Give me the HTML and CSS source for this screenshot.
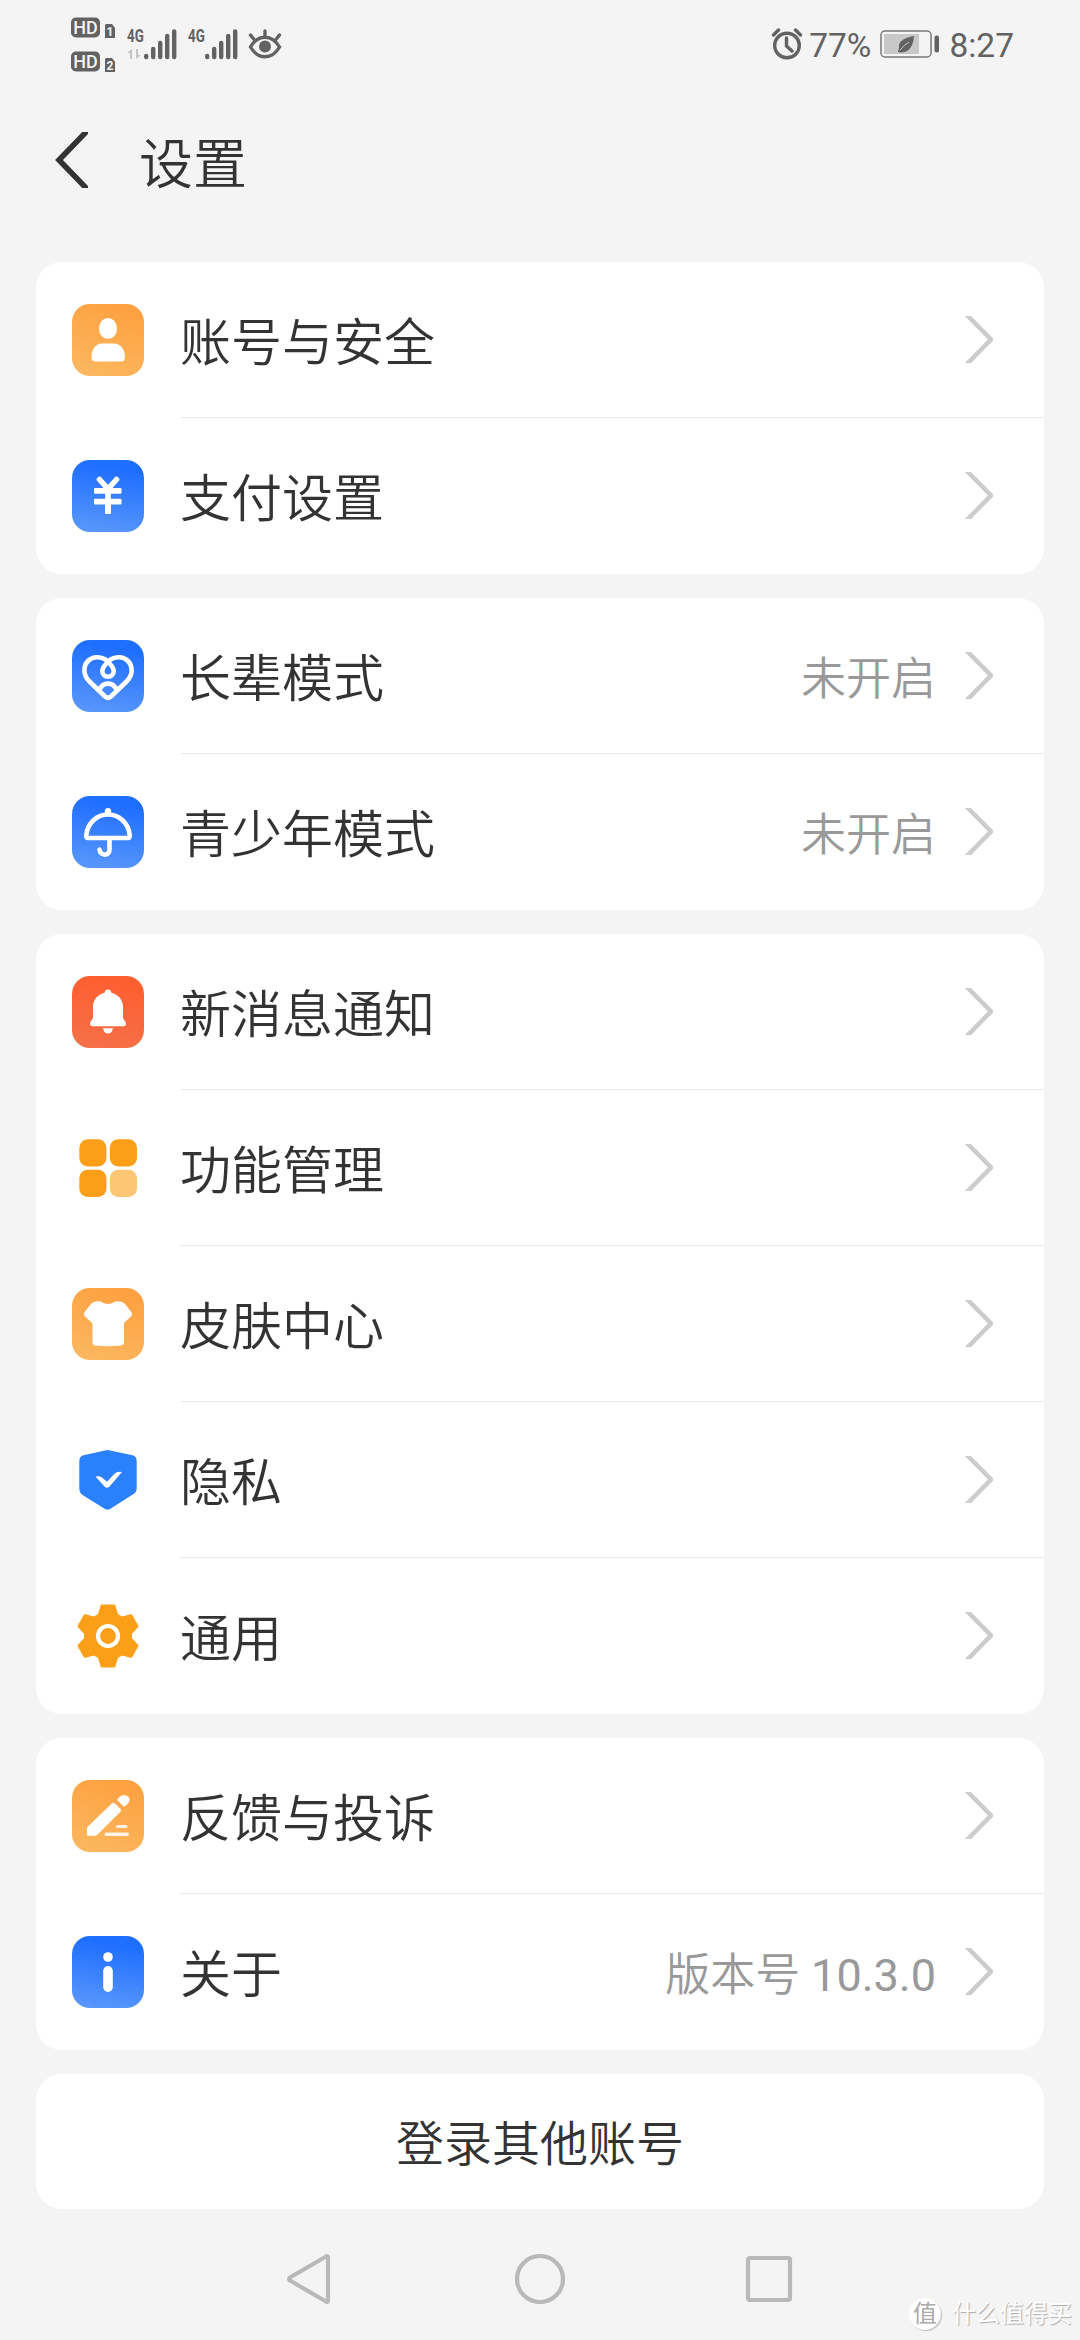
FILE: index.html
```html
<!DOCTYPE html>
<html lang="zh-CN">
<head>
<meta charset="utf-8">
<title>设置</title>
<link rel="stylesheet" href="styles.css">
</head>
<body>
<svg class="defs" width="0" height="0">
  <symbol id="chevron" viewBox="0 0 28 47"><path d="M1-2 26 23.500 1 49" fill="none" stroke="currentColor" stroke-width="4.500"/></symbol>
  <symbol id="signal" viewBox="0 0 33 31"><path d="M2.200 27v1M9.200 20v8M16.200 14v14M23.200 7v21M30.200 2.500V28" fill="none" stroke="currentColor" stroke-width="4.400" stroke-linecap="round"/></symbol>
</svg>
<div class="screen">
  <header class="status">
    <svg class="status-hd" width="45" height="56" viewBox="0 0 45 56">
      <rect width="29" height="20" rx="5" y=".5"/><text x="14.500" y="17" class="hd">HD</text>
      <rect width="29" height="20" rx="5" y="34.500"/><text x="14.500" y="51" class="hd">HD</text>
      <path d="M35 7h6l3 4v10H34V8zM35 41h6l3 4v10H34V42z"/>
      <text x="39" y="19.300" class="sim">1</text><text x="39" y="53.300" class="sim">2</text>
    </svg>
    <div class="network">
      <div class="gen-col"><span class="gen">4G</span><svg width="17" height="12" viewBox="0 19 17 12"><path class="faint" d="M0 24l5-4v10H3v-6zM9 20h2v6h3l-5 4z"/></svg></div>
      <svg class="bars" width="33" height="31"><use href="#signal"/></svg>
    </div>
    <div class="network">
      <div class="gen-col"><span class="gen">4G</span></div>
      <svg class="bars" width="33" height="31"><use href="#signal"/></svg>
    </div>
    <svg class="eye" width="34" height="30" viewBox="0 0 34 30"><g fill="none" stroke="currentColor" stroke-width="3.400" stroke-linecap="round"><path d="M2.500 18C10 5 24 5 31.500 18 24 31 10 31 2.500 18zM17 2v5M2.500 6l4 5M31.500 6l-4 5"/></g><circle cx="17" cy="17.500" r="6"/></svg>
    <div class="status-right">
      <svg width="32" height="32" viewBox="0 0 32 32"><g fill="none" stroke="currentColor" stroke-width="3.400"><circle cx="16" cy="17.500" r="12.300"/><path d="M2.500 7l5-5M24.500 2l5 5M15.500 10v8l5.500 5" stroke-linecap="round"/></g></svg>
      <span class="percent">77%</span>
      <svg class="battery" width="60" height="28" viewBox="0 0 60 28"><rect x="1" y="1" width="50" height="26" rx="4" fill="none" stroke="#777" stroke-width="1.500"/><rect x="4" y="4" width="35" height="20" fill="#c8c8c8"/><path d="M34 6C24 8 18 11 19 18l-1 4 2 .5C28 23 33 18 34 6z"/><path d="M20 20Q24 15 29 12" fill="none" stroke="#c8c8c8"/><rect x="54.500" y="5.500" width="4.500" height="17" rx="2"/></svg>
      <span>8:27</span>
    </div>
  </header>
  <div class="titlebar">
    <svg width="33" height="56" viewBox="0 0 33 56"><path d="M34-3 4 28l30 31" fill="none" stroke="#333" stroke-width="5.600"/></svg>
    <h1>设置</h1>
  </div>
  <main class="groups">
    <section class="card">
      <div class="row"><svg class="icon orange" viewBox="0 0 72 72"><ellipse cx="36" cy="24.500" rx="9" ry="10.500"/><path d="M30 39.500h12c7 0 11 7 11 13.500q0 4.500-4 4.500H23.500q-4 0-4-4.500c0-6.500 3.500-13.500 10.500-13.500z"/></svg><div class="cell"><span class="label">账号与安全</span><svg class="chevron"><use href="#chevron"/></svg></div></div>
      <div class="row"><svg class="icon blue" viewBox="0 0 72 72"><path d="M27.500 19.500 36 29l8.500-9.500M36 29v22" class="line yen"/><rect x="22" y="28" width="27.500" height="5.800" rx="1"/><rect x="22" y="38.700" width="27.500" height="5.800" rx="1"/><rect x="33" y="44" width="6" height="10" rx="1"/></svg><div class="cell"><span class="label">支付设置</span><svg class="chevron"><use href="#chevron"/></svg></div></div>
    </section>
    <section class="card">
      <div class="row"><svg class="icon blue" viewBox="0 0 72 72"><path class="line" d="M33 56.500 17 41C11 35 11 26 16 21c5-5 13-4.500 17.500-1.500C37 22.500 41.700 27 41.700 31a5.700 5.700 0 0 1-11.400 0c0-4 4.700-8.500 8.200-11.500C43 16.500 51 16 56 21c5 5 5 14-1 20L39 56.500q-3 2.500-6 0zM27.500 50c3-8.500 14-8.500 17 0"/></svg><div class="cell"><span class="label">长辈模式</span><span class="value">未开启</span><svg class="chevron"><use href="#chevron"/></svg></div></div>
      <div class="row"><svg class="icon blue" viewBox="0 0 72 72"><path class="line" d="M16 42q-2 0-1.700-3C15.500 27 25 18.500 36 18.500S56.500 27 57.700 39q.3 3-1.700 3zM37.500 43v11c0 6-9.500 6.500-10-.5"/><circle cx="36" cy="15.200" r="3.200"/></svg><div class="cell"><span class="label">青少年模式</span><span class="value">未开启</span><svg class="chevron"><use href="#chevron"/></svg></div></div>
    </section>
    <section class="card">
      <div class="row"><svg class="icon red" viewBox="0 0 72 72"><path d="M36 13.500a3.500 3.500 0 0 1 3.400 3.300C46.500 18.500 51 24 51 31v10c0 3 3 4 3 7q0 2.300-2.500 2.300h-31Q18 50.300 18 48c0-3 3-4 3-7V31c0-7 4.500-12.500 11.600-14.200A3.500 3.500 0 0 1 36 13.500zM31 52.300h10q-1 5.200-5 5.200t-5-5.200z"/></svg><div class="cell"><span class="label">新消息通知</span><svg class="chevron"><use href="#chevron"/></svg></div></div>
      <div class="row"><svg class="icon" viewBox="0 0 72 72"><g fill="#fb9f18"><rect x="7.300" y="7.300" width="27.200" height="27.200" rx="8.500"/><rect x="37.800" y="7.300" width="27.200" height="27.200" rx="8.500"/><rect x="7.300" y="37.800" width="27.200" height="27.200" rx="8.500"/><rect x="37.800" y="37.800" width="27.200" height="27.200" rx="8.500" fill="#fcc675"/></g></svg><div class="cell"><span class="label">功能管理</span><svg class="chevron"><use href="#chevron"/></svg></div></div>
      <div class="row"><svg class="icon orange" viewBox="0 0 72 72"><path d="M24 13.500q4-.5 6 .8 6 3.200 12 0 2-1.300 6-.8 3 .2 5 2.500l6 7.500q2 2.500 0 5l-5.500 5q-1.500.5-1.500 2.500v18q0 3-3 3.500-13 1.500-26 0-2.500-.5-2.500-3.500V36q-.5-2-2-2.500l-5.500-5q-2-2.500 0-5l6-7.500q2-2.300 5-2.500z"/></svg><div class="cell"><span class="label">皮肤中心</span><svg class="chevron"><use href="#chevron"/></svg></div></div>
      <div class="row"><svg class="icon" viewBox="0 0 72 72"><path fill="#2b81fd" d="M33 6.400q2.500-.8 5 0l22.500 4.900q4.200 1.200 4.200 5.700v27q0 4-3.200 6L38 65q-2.500 1.500-5 0L10.500 51q-3.200-2-3.200-7V17q0-4.500 4.200-5.700z"/><path d="M23.500 32.500q4-1 6.500 1l5 4.200 7.500-8Q45 27.300 50 28L37.500 42.500q-2.500 2.500-5 0z"/></svg><div class="cell"><span class="label">隐私</span><svg class="chevron"><use href="#chevron"/></svg></div></div>
      <div class="row"><svg class="icon" viewBox="-36 -36 72 72"><g fill="#fb9f18" stroke="#fb9f18" stroke-width="3" stroke-linejoin="round"><circle r="22.500"/><path id="tooth" d="M-6-30H6l2.500 8.500v43L6 30H-6l-2.500-8.500v-43z"/><use href="#tooth" transform="rotate(60)"/><use href="#tooth" transform="rotate(120)"/></g><circle r="10" fill="none" stroke="#fff" stroke-width="4.200"/></svg><div class="cell"><span class="label">通用</span><svg class="chevron"><use href="#chevron"/></svg></div></div>
    </section>
    <section class="card">
      <div class="row"><svg class="icon orange" viewBox="0 0 72 72"><path d="M15.500 47 40 23.300q1.500-1 2.700 0l6 5.700q1 1.300 0 2.500L25 55q-.7.800-2 .8h-6.500q-1.500 0-1.500-1.500V48.500zM45 20c2-3 4-5 8-4.700 4.500.6 5.500 4.500 3.500 7.700q-2 2.700-4.500 3.700z"/><rect x="44" y="45" width="11.500" height="3" rx="1.500" opacity=".85"/><rect x="32.500" y="52.500" width="24.500" height="3.400" rx="1.600" opacity=".85"/></svg><div class="cell"><span class="label">反馈与投诉</span><svg class="chevron"><use href="#chevron"/></svg></div></div>
      <div class="row"><svg class="icon blue" viewBox="0 0 72 72"><circle cx="36" cy="21" r="4.800"/><rect x="31.200" y="30" width="9.600" height="26" rx="4.800"/></svg><div class="cell"><span class="label">关于</span><span class="value">版本号 <span class="version">10.3.0</span></span><svg class="chevron"><use href="#chevron"/></svg></div></div>
    </section>
    <button class="card switch">登录其他账号</button>
  </main>
  <nav class="navbar">
    <svg width="50" height="50" viewBox="0 0 50 50"><path d="M42 3.500v43q0 2-2 1L4 26.500q-2-1.500 0-3l36-21q2-1 2 1z"/></svg>
    <svg width="50" height="50" viewBox="0 0 50 50"><circle cx="25" cy="25" r="23"/></svg>
    <svg width="50" height="50" viewBox="0 0 50 50"><rect x="4" y="4" width="42" height="42" rx="2"/></svg>
  </nav>
  <div class="watermark"><span class="badge">值</span><span>什么值得买</span></div>
</div>
</body>
</html>
```
FILE: styles.css
```css
* { box-sizing: border-box; }
body { margin: 0; background: #f4f4f4; }
.defs { display: block; height: 0; }
svg { display: block; flex: none; }
.screen {
  position: relative;
  display: flex;
  flex-direction: column;
  width: 1080px;
  height: 2340px;
  overflow: hidden;
  color: #333;
  font-family: Roboto, "Noto Sans CJK SC", sans-serif;
  font-weight: 350;
}
.status {
  display: flex;
  align-items: flex-start;
  height: 90px;
  padding: 17px 66px 0 71px;
  color: #626262;
  fill: currentColor;
}
.hd { fill: #f4f4f4; font: 500 18px Roboto, sans-serif; text-anchor: middle; }
.sim { fill: #f4f4f4; font: 700 12px Roboto, sans-serif; text-anchor: middle; }
.gen-col { width: 17px; }
.gen {
  display: block;
  width: 23px;
  height: 19px;
  font: 700 18px/14px Roboto, sans-serif;
  transform: scaleX(.74);
  transform-origin: 0 0;
}
.faint { fill: #c4c4c4; }
.network { display: flex; margin: 12px 0 0 11px; }
.status-hd + .network { margin-left: 11px; }
.eye { margin: 12px 0 0 10px; }
.status-right {
  display: flex;
  align-items: center;
  height: 34px;
  margin: 10px 0 0 auto;
  font-size: 33.500px;
  font-weight: 400;
  line-height: 34px;
}
.status-right span { padding-top: 3px; }
.percent { margin-left: 6px; }
.battery { margin: 0 9px 0 9px; }
.titlebar {
  display: flex;
  align-items: center;
  height: 140px;
  padding: 0 55px;
}
.titlebar h1 {
  margin: 11px 0 0 51px;
  font-size: 54px;
  font-weight: 350;
  line-height: 60px;
}
.groups {
  display: flex;
  flex-direction: column;
  gap: 24px;
  padding: 32px 36px 0;
}
.card {
  border-radius: 26px;
  background: #fff;
  overflow: hidden;
}
.row {
  display: flex;
  align-items: center;
  height: 156px;
  padding-left: 36px;
}
.icon { width: 72px; height: 72px; border-radius: 18px; fill: #fff; }
.orange { background: linear-gradient(200deg, #fe9e3c, #fbb962); }
.blue { background: linear-gradient(190deg, #1e6eff 15%, #5c99fb); }
.red { background: linear-gradient(190deg, #ff5c2c, #f5714a); }
.line { fill: none; stroke: #fff; stroke-width: 4.600; stroke-linecap: round; stroke-linejoin: round; }
.yen { stroke-width: 5.600; }
.cell {
  display: flex;
  flex: 1;
  align-items: center;
  height: 156px;
  margin-left: 36px;
  padding-right: 51px;
  border-bottom: 1px solid #eaeaea;
}
.row:last-child .cell { border-bottom-color: transparent; }
.label { flex: 1; padding-top: 9px; font-size: 51px; line-height: 60px; }
.value { padding-top: 8px; color: #999; font-size: 45px; line-height: 54px; }
.version { font-weight: 400; }
.chevron { width: 28px; height: 47px; margin-left: 29px; color: #ccc; }
.switch {
  height: 135px;
  padding: 0 0 3px;
  border: 0;
  color: #333;
  font: inherit;
  font-size: 48px;
}
.navbar {
  display: flex;
  justify-content: space-between;
  margin-top: 45px;
  padding: 0 286px;
}
.navbar svg { fill: none; stroke: #b9b9b9; stroke-width: 4.200; }
.watermark {
  position: absolute;
  right: 8px;
  bottom: 9px;
  display: flex;
  align-items: center;
  gap: 11px;
  color: #fff;
  font-size: 24px;
  font-weight: 400;
  line-height: 34px;
  text-shadow: 1px 1px 1px #aaa;
}
.badge {
  width: 32px;
  height: 32px;
  border-radius: 50%;
  background: #fff;
  box-shadow: 1px 1px 1px #bbb;
  color: #aaa;
  text-align: center;
  line-height: 32px;
  text-shadow: none;
}
```
